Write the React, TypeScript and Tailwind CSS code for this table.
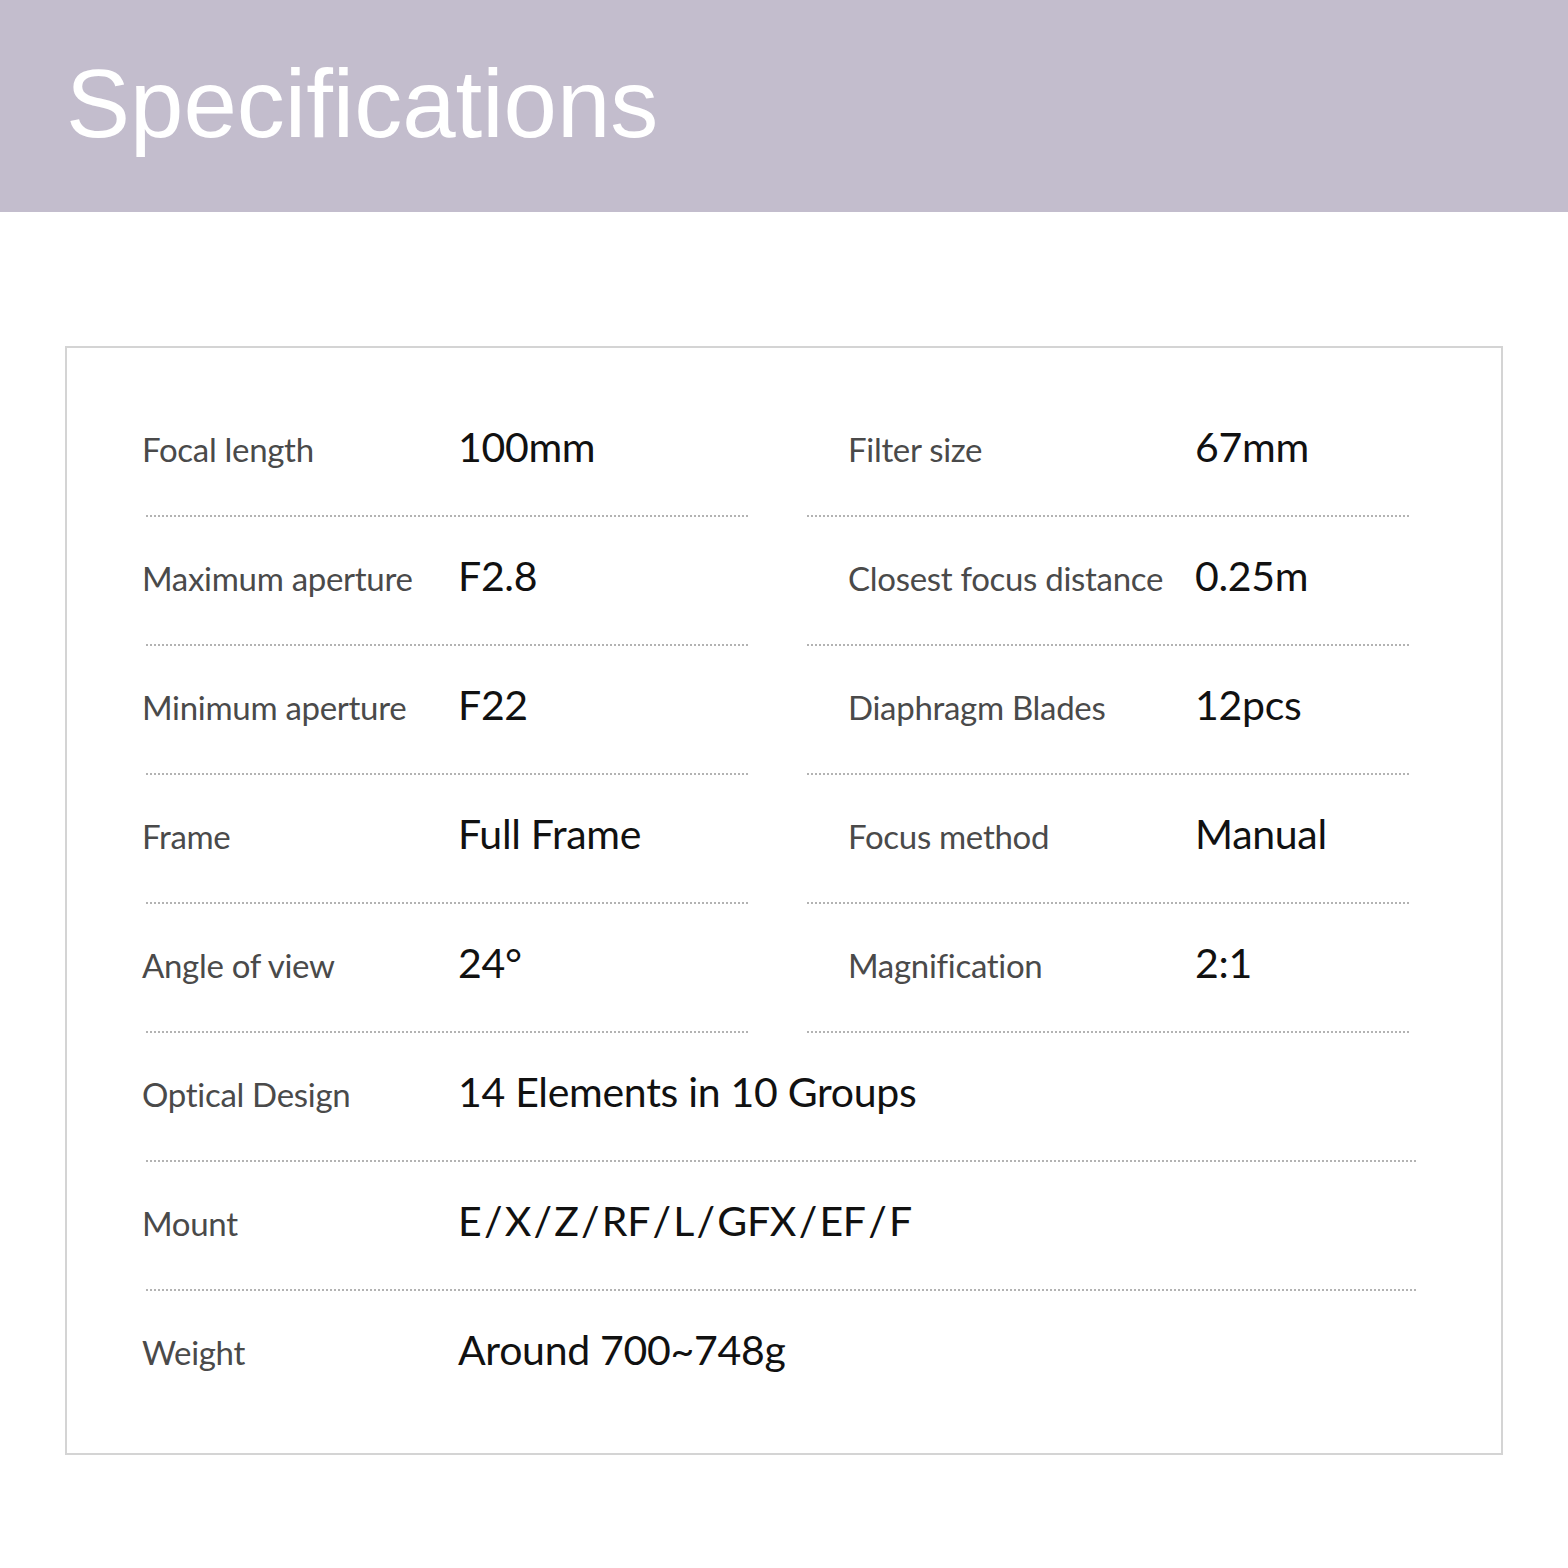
type TSpec = { label: string; value: string };

const pairs: [TSpec, TSpec][] = [
  [
    { label: 'Focal length', value: '100mm' },
    { label: 'Filter size', value: '67mm' },
  ],
  [
    { label: 'Maximum aperture', value: 'F2.8' },
    { label: 'Closest focus distance', value: '0.25m' },
  ],
  [
    { label: 'Minimum aperture', value: 'F22' },
    { label: 'Diaphragm Blades', value: '12pcs' },
  ],
  [
    { label: 'Frame', value: 'Full Frame' },
    { label: 'Focus method', value: 'Manual' },
  ],
  [
    { label: 'Angle of view', value: '24°' },
    { label: 'Magnification', value: '2:1' },
  ],
];

const wide: TSpec[] = [
  { label: 'Optical Design', value: '14 Elements in 10 Groups' },
  { label: 'Mount', value: 'E/X/Z/RF/L/GFX/EF/F' },
  { label: 'Weight', value: 'Around 700~748g' },
];

const Dots = ({ className }: { className: string }) => (
  <div
    className={`h-[2px] bg-[linear-gradient(to_right,#b3b3b3_50%,transparent_50%)] bg-[length:4px_2px] ${className}`}
  />
);

// slashes in the mount list sit a little apart from the letters
const Value = ({ text }: { text: string }) => {
  if (!text.includes('/')) return <>{text}</>;
  const parts = text.split('/');
  return (
    <>
      {parts.map((part, i) => (
        <span key={part + i}>
          {part}
          {i < parts.length - 1 ? <span className="mx-[2.5px]">/</span> : null}
        </span>
      ))}
    </>
  );
};

const Cell = ({ spec, labelWidth }: { spec: TSpec; labelWidth: string }) => (
  <div className="-ml-[2px] flex h-[127px] items-center pb-[10px]">
    <div className="flex items-baseline">
      <span className={`${labelWidth} shrink-0 text-[33px] tracking-[-0.3px] text-[#4a4a4a]`}>
        {spec.label}
      </span>
      <span className="text-[41px] tracking-[-0.3px] text-[#111]">
        <Value text={spec.value} />
      </span>
    </div>
  </div>
);

const App = () => {
  return (
    <div className="min-h-[1568px] w-[1568px] bg-white font-['Lato',sans-serif]">
      <header className="h-[212px] bg-[#c3bdcd] pl-[66px] pt-[56px]">
        <h1 className="font-['Liberation_Sans',Arial,sans-serif] text-[96px] leading-none text-white">
          Specifications
        </h1>
      </header>

      <section className="ml-[65px] mt-[134px] w-[1438px] border-2 border-[#d4d4d4] pb-[35px] pl-[77px] pt-[40px]">
        {pairs.map(([left, right]) => (
          <div key={left.label} className="flex gap-[58px]">
            <div className="w-[604px]">
              <Cell spec={left} labelWidth="w-[316px]" />
              <Dots className="ml-[2px] w-[604px]" />
            </div>
            <div className="w-[604px]">
              <div className="pl-[44px]">
                <Cell spec={right} labelWidth="w-[347px]" />
              </div>
              <Dots className="ml-[1px] w-[604px]" />
            </div>
          </div>
        ))}
        {wide.map((spec, i) => (
          <div key={spec.label}>
            <Cell spec={spec} labelWidth="w-[316px]" />
            {i < wide.length - 1 ? <Dots className="ml-[2px] w-[1272px]" /> : null}
          </div>
        ))}
      </section>
    </div>
  );
};

export default App;
